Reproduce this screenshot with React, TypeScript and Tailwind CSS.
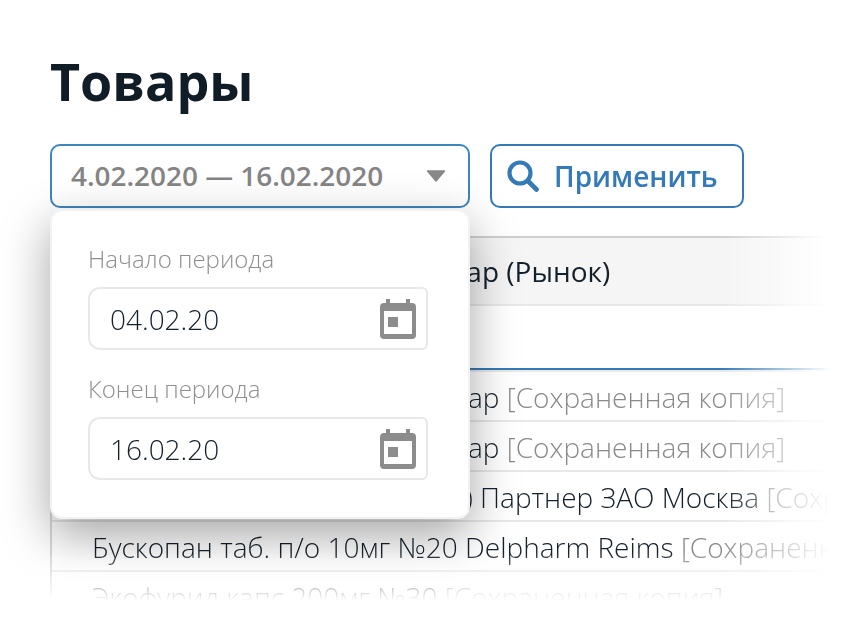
const font = { fontFamily: '"Open Sans", sans-serif' };

function CalendarIcon() {
  return (
    <svg width="36" height="40" viewBox="0 0 36 40" className="shrink-0">
      <rect x="6" y="0" width="4" height="6" fill="#8c8c8c" />
      <rect x="26" y="0" width="4" height="6" fill="#8c8c8c" />
      <path
        fillRule="evenodd"
        fill="#8c8c8c"
        d="M4 4h28a4 4 0 0 1 4 4v28a4 4 0 0 1-4 4H4a4 4 0 0 1-4-4V8a4 4 0 0 1 4-4zM4 12v23h28V12z"
      />
      <rect x="8" y="18" width="10" height="10" fill="#8c8c8c" />
    </svg>
  );
}

function DateField({ label, value }: { label: string; value: string }) {
  return (
    <div className="flex flex-col">
      <div className="text-[24px] leading-[30px] font-light text-[#8f8f8f]">{label}</div>
      <div className="mt-[13px] flex h-[63px] w-[340px] items-center justify-between rounded-l-[12px] rounded-r-[6px] border-2 border-[#e8e8e8] bg-white pl-[20px] pr-[10px]">
        <span className="text-[28px] font-light text-[#15202b]">{value}</span>
        <CalendarIcon />
      </div>
    </div>
  );
}

function Row({ lead, note, pad }: { lead: string; note: string; pad: number }) {
  return (
    <div
      className="flex h-[50px] shrink-0 items-center whitespace-pre border-b-2 border-[#e8e8e8] pt-[2px] text-[28px] font-light text-[#15202b]"
      style={{ paddingLeft: pad }}
    >
      <span>{lead} </span>
      <span className="text-[#8a8a8a]">{note}</span>
    </div>
  );
}

export default function App() {
  return (
    <div className="relative h-[622px] w-[846px] overflow-hidden bg-white" style={font}>
      <div className="flex h-full transform-gpu flex-col pl-[50px] pt-[46px]">
        <h1 className="text-[52px] leading-[70px] font-bold text-[#101c26]">Товары</h1>

        <div className="relative z-20 mt-[28px] flex gap-[20px]">
          <div className="flex h-[64px] w-[420px] items-center justify-between rounded-[10px] border-2 border-[#3d85bd] bg-white pl-[19px] pr-[22px]">
            <span className="text-[27.9px] font-semibold text-[#858585]">4.02.2020 — 16.02.2020</span>
            <svg width="20" height="12" viewBox="0 0 20 12">
              <path d="M1.5 1h17l-8.5 10z" fill="#888" stroke="#888" strokeWidth="1.5" strokeLinejoin="round" />
            </svg>
          </div>
          <div className="flex h-[64px] w-[254px] items-center gap-[15px] rounded-[10px] border-2 border-[#337ab7] bg-white pl-[15px]">
            <svg width="32" height="32" viewBox="0 0 32 32">
              <circle cx="13" cy="13" r="10.5" fill="none" stroke="#337ab7" strokeWidth="4.2" />
              <path d="M21 21l8.5 8.5" stroke="#337ab7" strokeWidth="4.6" strokeLinecap="round" />
            </svg>
            <span className="text-[28px] font-semibold text-[#337ab7]">Применить</span>
          </div>

          <div className="absolute left-0 top-[65px] z-30 flex h-[310px] w-[420px] flex-col gap-[24px] rounded-[12px] border-2 border-[#f2f2f2] bg-white pl-[36px] pt-[33px] shadow-[0_16px_48px_rgba(0,0,0,0.36)]">
            <DateField label="Начало периода" value="04.02.20" />
            <DateField label="Конец периода" value="16.02.20" />
          </div>
        </div>

        <div className="mt-[28px] flex flex-1 flex-col border-l-2 border-[#d8d8d8]">
          <div className="flex h-[70px] shrink-0 items-center border-y-2 border-t-[#cfcfcf] border-b-[#e8e8e8] bg-[#f5f5f5] pl-[366px] text-[28px] text-[#15202b]">
            Товар (Рынок)
          </div>
          <div className="h-[62px] shrink-0" />
          <div className="h-[4px] shrink-0 border-t-[2px] border-[#337ab7] bg-[#e8e8e8]" />
          <Row pad={369} lead="Товар" note="[Сохраненная копия]" />
          <Row pad={369} lead="Товар" note="[Сохраненная копия]" />
          <Row pad={35} lead="Нурофен таб. п/о 200мг №20) Партнер ЗАО Москва" note="[Сохраненная копия]" />
          <Row pad={40} lead="Бускопан таб. п/о 10мг №20 Delpharm Reims" note="[Сохраненная копия]" />
          <Row pad={40} lead="Экофурид капс 200мг №30" note="[Сохраненная копия]" />
        </div>
      </div>

      <div className="pointer-events-none absolute bottom-0 right-0 top-[230px] z-40 w-[126px] bg-gradient-to-r from-white/0 to-white to-[88%]" />
      <div className="pointer-events-none absolute inset-x-0 bottom-0 z-40 h-[70px] bg-gradient-to-b from-white/0 to-white to-[70%]" />
    </div>
  );
}
